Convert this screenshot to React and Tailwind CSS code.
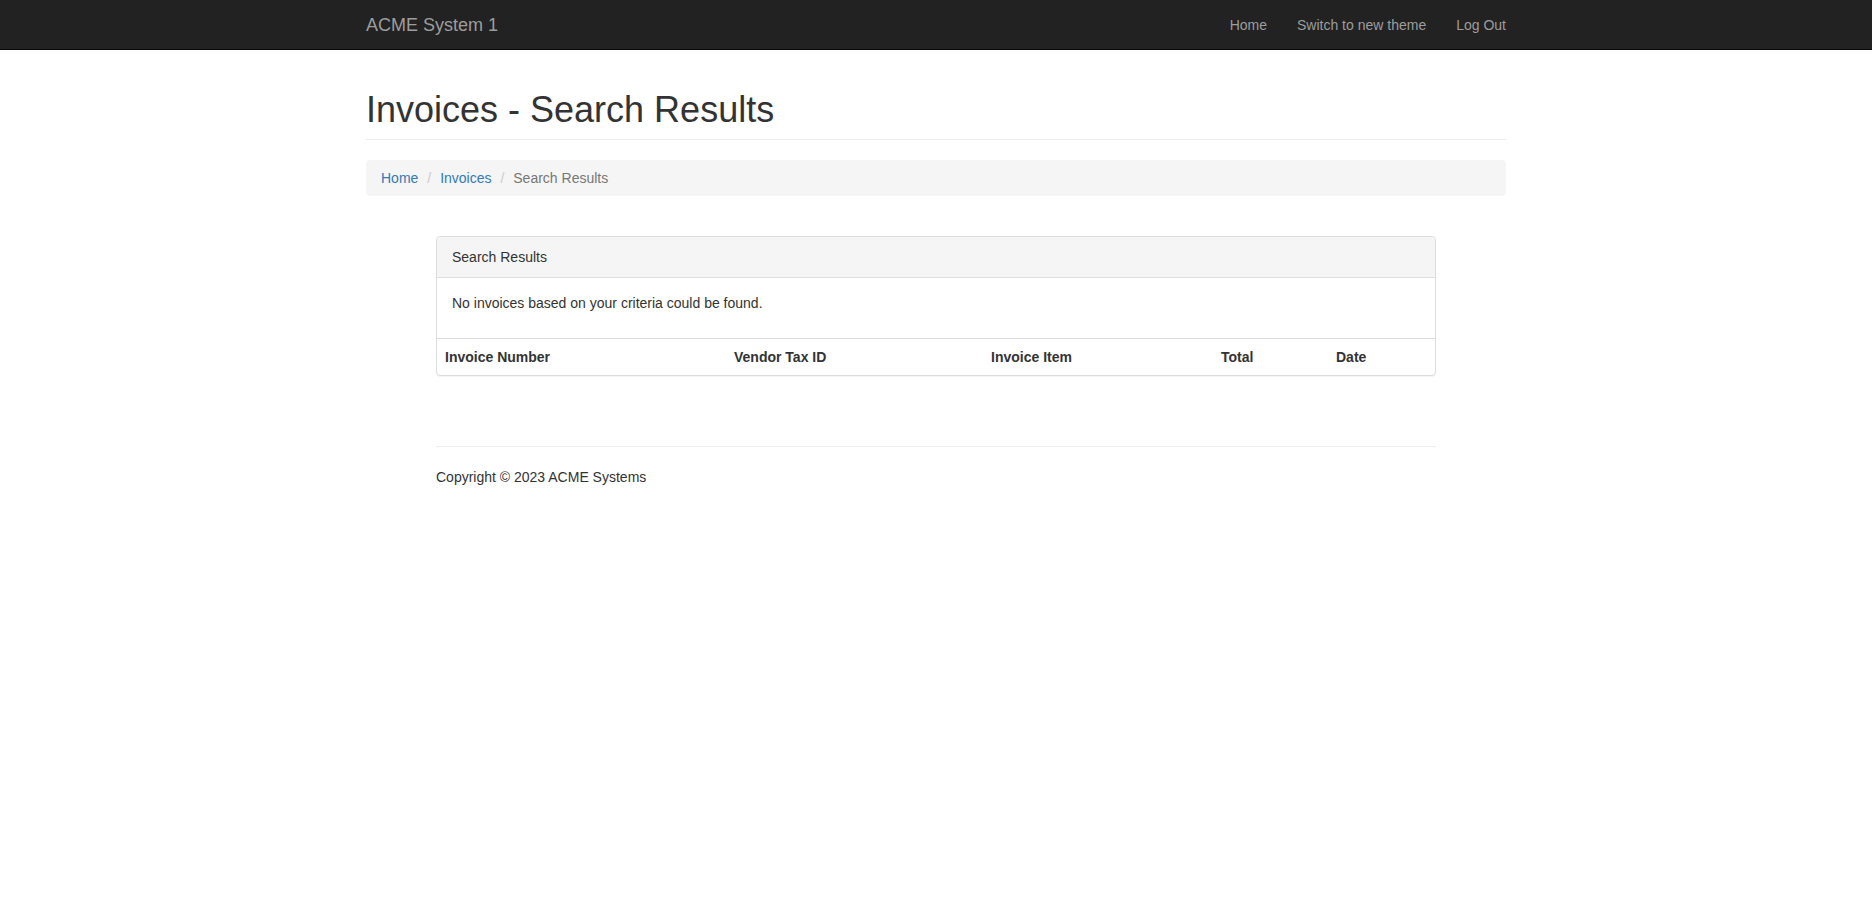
const font = { fontFamily: '"Liberation Sans", Arial, Helvetica, sans-serif' };

function Navbar() {
  return (
    <nav className="h-[50px] bg-[#222] border-b border-[#080808]">
      <div className="w-[1140px] mx-auto flex items-center justify-between h-full">
        <a className="text-[18px] leading-5 text-[#9d9d9d]">ACME System 1</a>
        <ul className="flex -mr-[15px]">
          {['Home', 'Switch to new theme', 'Log Out'].map((item) => (
            <li key={item}>
              <a className="block px-[15px] py-[15px] text-[14px] leading-5 text-[#9d9d9d]">{item}</a>
            </li>
          ))}
        </ul>
      </div>
    </nav>
  );
}

function Breadcrumb() {
  const Sep = () => <span className="ml-1 px-[5px] text-[#ccc]">/{'\u00a0'}</span>;
  return (
    <ol className="flex items-center bg-[#f5f5f5] rounded px-[15px] py-2 text-[14px] leading-5 mb-5">
      <li><a className="text-[#337ab7]">Home</a></li>
      <li><Sep /><a className="text-[#337ab7]">Invoices</a></li>
      <li className="text-[#777]"><Sep />Search Results</li>
    </ol>
  );
}

function ResultsPanel() {
  const columns = [
    { label: 'Invoice Number', width: 'w-[289px]' },
    { label: 'Vendor Tax ID', width: 'w-[257px]' },
    { label: 'Invoice Item', width: 'w-[230px]' },
    { label: 'Total', width: 'w-[115px]' },
    { label: 'Date', width: '' },
  ];

  return (
    <div className="border border-[#ddd] rounded bg-white shadow-[0_1px_1px_rgba(0,0,0,0.05)]">
      <div className="bg-[#f5f5f5] border-b border-[#ddd] rounded-t px-[15px] py-[10px] text-[14px] leading-5 text-[#333]">
        Search Results
      </div>
      <div className="p-[15px]">
        <p className="text-[14px] leading-5 mb-[10px]">No invoices based on your criteria could be found.</p>
      </div>
      <table className="w-full border-t border-[#ddd] border-collapse">
        <thead>
          <tr>
            {columns.map((col) => (
              <th key={col.label} className={`${col.width} text-left font-bold p-2 text-[14px] leading-5 text-[#333]`}>
                {col.label}
              </th>
            ))}
          </tr>
        </thead>
      </table>
    </div>
  );
}

export default function App() {
  return (
    <div className="min-h-[912px] bg-white text-[#333]" style={font}>
      <Navbar />
      <div className="w-[1140px] mx-auto">
        <div className="mt-10 mb-5 pb-[9px] border-b border-[#eee]">
          <h1 className="text-[36px] leading-[1.1] text-[#333]">Invoices - Search Results</h1>
        </div>
        <Breadcrumb />
        <div className="w-[1000px] mx-auto pt-5">
          <ResultsPanel />
          <hr className="mt-[70px] mb-5 border-t border-[#eee]" />
          <footer>
            <p className="text-[14px] leading-5">Copyright © 2023 ACME Systems</p>
          </footer>
        </div>
      </div>
    </div>
  );
}
